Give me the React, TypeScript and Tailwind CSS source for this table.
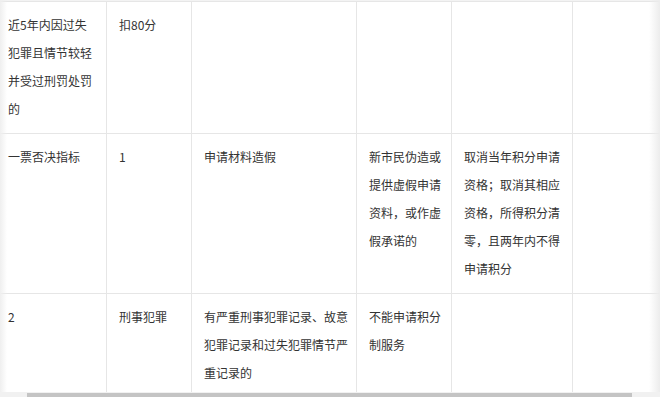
import React from 'react';

type Row = { cells: string[]; };

const rows: Row[] = [
  { cells: ['近5年内因过失犯罪且情节较轻并受过刑罚处罚的', '扣80分', '', '', '', ''] },
  {
    cells: [
      '一票否决指标',
      '1',
      '申请材料造假',
      '新市民伪造或提供虚假申请资料，或作虚假承诺的',
      '取消当年积分申请资格；取消其相应资格，所得积分清零，且两年内不得申请积分',
      '',
    ],
  },
  { cells: ['2', '刑事犯罪', '有严重刑事犯罪记录、故意犯罪记录和过失犯罪情节严重记录的', '不能申请积分制服务', '', ''] },
];

const colWidths = ['w-[111px]', 'w-[85px]', 'w-[165px]', 'w-[95px]', 'w-[121px]', 'w-[120px]'];

export default function App() {
  return (
    <div className="relative w-[660px] h-[397px] overflow-hidden bg-white text-[#333] text-[12px] font-['Noto_Sans_CJK_SC','Noto_Sans',sans-serif]">
      <div className="h-px bg-[#f3f3f3]" />
      <table className="ml-[-5px] table-fixed border-collapse w-[697px]">
        <colgroup>
          {colWidths.map((w, i) => (
            <col key={i} className={w} />
          ))}
        </colgroup>
        <tbody>
          {rows.map((row, ri) => (
            <tr key={ri}>
              {row.cells.map((c, ci) => (
                <td
                  key={ci}
                  className="border border-[#e6e6e6] align-top pl-3 pr-2 pt-[9px] pb-[10px] leading-[28px] break-all"
                >
                  {c}
                </td>
              ))}
            </tr>
          ))}
        </tbody>
      </table>

      {/* edge shadows */}
      <div className="absolute left-0 top-0 bottom-0 w-[7px] bg-gradient-to-r from-[#efefef] to-transparent" />
      <div className="absolute right-0 top-0 bottom-0 w-[11px] bg-gradient-to-l from-[#ececec] to-transparent" />

      {/* horizontal scrollbar */}
      <div className="absolute left-0 right-0 bottom-0 h-[5px] bg-[#f1f1f1]">
        <div className="absolute left-[27px] w-[605px] top-[1px] h-[4px] bg-[#c4c4c4]" />
      </div>
    </div>
  );
}
